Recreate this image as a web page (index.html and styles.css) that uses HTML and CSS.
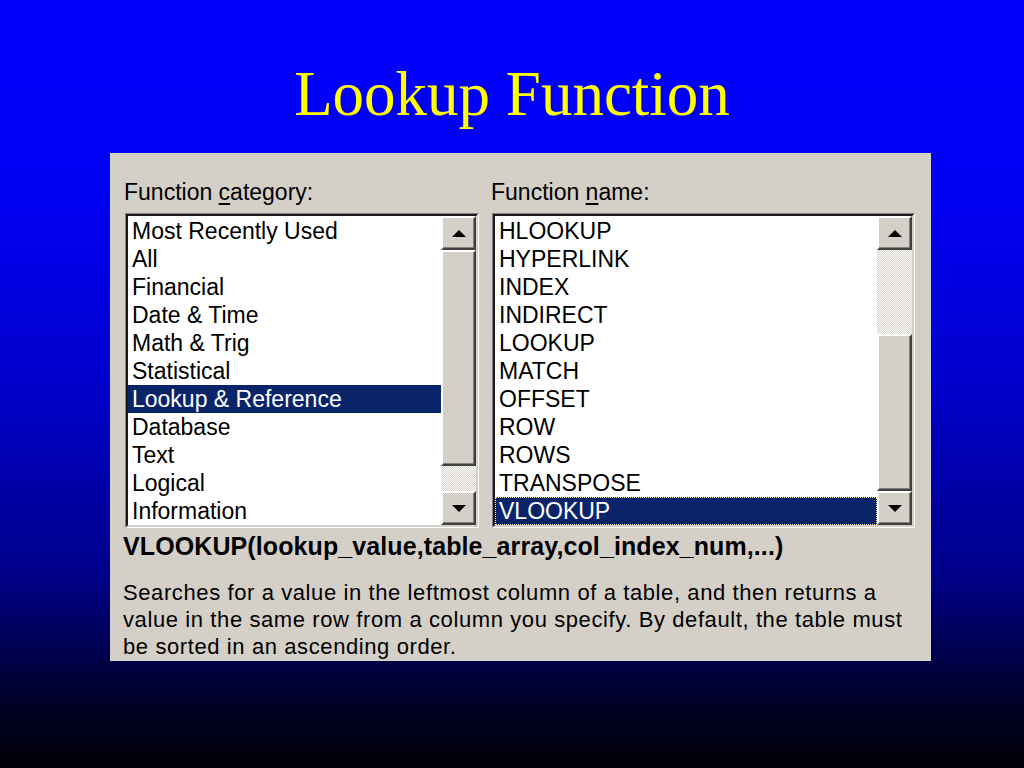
FILE: index.html
```html
<!DOCTYPE html>
<html lang="en">
<head>
    <meta charset="UTF-8">
    <meta name="viewport" content="width=device-width, initial-scale=1.0">
    <title>Lookup Function</title>
    <link rel="stylesheet" href="styles.css">
</head>
<body>

<h1 class="title">Lookup Function</h1>

<div class="dialog">
    <div class="lists">
        <div class="column">
            <div class="label">Function <u>c</u>ategory:</div>
            <div class="listbox">
                <div class="listbox-inner">
                    <ul class="items">
                        <li>Most Recently Used</li>
                        <li>All</li>
                        <li>Financial</li>
                        <li>Date &amp; Time</li>
                        <li>Math &amp; Trig</li>
                        <li>Statistical</li>
                        <li class="selected">Lookup &amp; Reference</li>
                        <li>Database</li>
                        <li>Text</li>
                        <li>Logical</li>
                        <li>Information</li>
                    </ul>
                    <div class="scrollbar">
                        <div class="sb-btn"><span class="arrow up"></span></div>
                        <div class="sb-thumb thumb-long"></div>
                        <div class="sb-track fill"></div>
                        <div class="sb-btn"><span class="arrow down"></span></div>
                    </div>
                </div>
            </div>
        </div>
        <div class="column">
            <div class="label">Function <u>n</u>ame:</div>
            <div class="listbox">
                <div class="listbox-inner">
                    <ul class="items">
                        <li>HLOOKUP</li>
                        <li>HYPERLINK</li>
                        <li>INDEX</li>
                        <li>INDIRECT</li>
                        <li>LOOKUP</li>
                        <li>MATCH</li>
                        <li>OFFSET</li>
                        <li>ROW</li>
                        <li>ROWS</li>
                        <li>TRANSPOSE</li>
                        <li class="selected focused">VLOOKUP</li>
                    </ul>
                    <div class="scrollbar">
                        <div class="sb-btn"><span class="arrow up"></span></div>
                        <div class="sb-track track-top"></div>
                        <div class="sb-thumb fill"></div>
                        <div class="sb-btn"><span class="arrow down"></span></div>
                    </div>
                </div>
            </div>
        </div>
    </div>

    <div class="syntax">VLOOKUP(lookup_value,table_array,col_index_num,...)</div>
    <p class="description">Searches for a value in the leftmost column of a table, and then returns a<br>value in the same row from a column you specify. By default, the table must<br>be sorted in an ascending order.</p>
</div>

</body>
</html>
```

FILE: styles.css
```css
* {
    box-sizing: border-box;
}
html, body {
    height: 100%;
}
body {
    margin: 0;
    min-height: 768px;
    font-family: "Liberation Sans", Arial, sans-serif;
    color: #000;
    background: linear-gradient(to bottom, #0000ff 0%, #0000f4 25%, #0000cc 50%, #000088 75%, #000024 92%, #000008 100%);
}
.title {
    height: 153px;
    margin: 0;
    padding-top: 58px;
    text-align: center;
    font: normal 63px/72px "Liberation Serif", "Times New Roman", serif;
    color: #ffff00;
}
.dialog {
    width: 821px;
    height: 508px;
    margin-left: 110px;
    padding: 25px 16px 0 15px;
    background: #d4d0c8;
}
.lists {
    display: grid;
    grid-template-columns: 354px 423px;
    column-gap: 13px;
}
.label {
    font-size: 23px;
    line-height: 28px;
    margin: 0 0 7px -1px;
    white-space: nowrap;
}
.label u {
    text-decoration-thickness: 2px;
    text-underline-offset: 3px;
}
.listbox {
    border: 1px solid;
    border-color: #808080 #ffffff #ffffff #808080;
}
.listbox-inner {
    display: flex;
    height: 313px;
    border: 2px solid;
    border-color: #1a1a1a #d4d0c8 #d4d0c8 #1a1a1a;
    background: #fff;
}
.items {
    flex: 1;
    margin: 0;
    padding: 1px 0 0;
    list-style: none;
}
.items li {
    height: 28px;
    padding-left: 4px;
    font-size: 23px;
    line-height: 28px;
    white-space: nowrap;
}
.items li.selected {
    background: #0a246a;
    color: #fff;
}
.items li.focused {
    border: 1px dotted #f4f0b0;
    padding-left: 3px;
    line-height: 26px;
}
.scrollbar {
    width: 35px;
    display: flex;
    flex-direction: column;
    background: #d4d0c8;
}
.sb-btn, .sb-thumb {
    border: 2px solid;
    border-color: #ffffff #404040 #404040 #ffffff;
    box-shadow: inset -1px -1px #808080;
    background: #d4d0c8;
}
.sb-btn {
    height: 34px;
    display: flex;
    align-items: center;
    justify-content: center;
}
.thumb-long {
    height: 216px;
}
.track-top {
    height: 84px;
}
.fill {
    flex: 1;
}
.sb-track {
    background: repeating-conic-gradient(#ffffff 0 25%, #d4d0c8 0 50%) 0 0 / 2px 2px;
}
.arrow {
    width: 0;
    height: 0;
    border-left: 7px solid transparent;
    border-right: 7px solid transparent;
}
.arrow.up {
    border-bottom: 7px solid #000;
}
.arrow.down {
    border-top: 7px solid #000;
}
.syntax {
    margin: 4px 0 0 -2px;
    font-size: 25px;
    font-weight: bold;
    line-height: 28px;
    letter-spacing: 0.1px;
    white-space: nowrap;
}
.description {
    margin: 19px 0 0 -2px;
    font-size: 22px;
    line-height: 27px;
    letter-spacing: 0.6px;
    white-space: nowrap;
}
```
